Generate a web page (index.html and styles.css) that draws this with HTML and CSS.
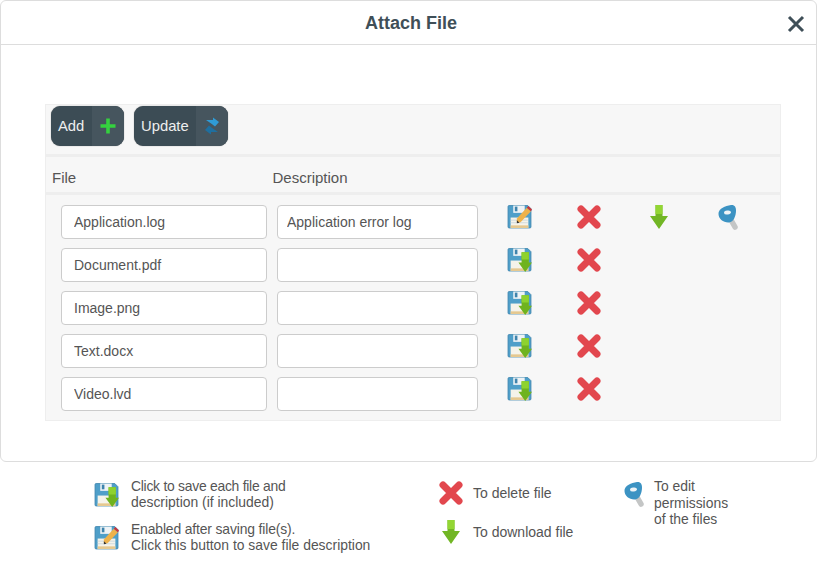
FILE: index.html
```html
<!DOCTYPE html>
<html lang="en">
<head>
<meta charset="utf-8">
<title>Attach File</title>
<link rel="stylesheet" href="styles.css">
</head>
<body>
<svg class="defs" width="0" height="0" aria-hidden="true">
  <defs>
    <symbol id="disk" viewBox="0 0 24 24">
      <path d="M1 2.500A1 1 0 0 1 2 1.500H20L23 4.500V22A1 1 0 0 1 22 23H2A1 1 0 0 1 1 22Z" fill="#4f9fc9" stroke="#3f84ad" stroke-width=".8"/>
      <rect x="6" y="1.500" width="11" height="7" fill="#eef3f6"/>
      <rect x="7.500" y="2.500" width="2.500" height="4.500" fill="#3f84ad"/>
      <rect x="3.500" y="13" width="17" height="10" fill="#f5f3ea"/>
      <rect x="3.500" y="20.500" width="17" height="2.500" fill="#e5c88f"/>
    </symbol>
    <symbol id="save-down" viewBox="0 0 24 24">
      <use href="#disk"/>
      <path d="M14 5H21V15H24L17.500 24L11 15H14Z" fill="#6fb31f"/>
      <path d="M14 5H21V12H14Z" fill="#8ed22f"/>
    </symbol>
    <symbol id="save-edit" viewBox="0 0 24 24">
      <use href="#disk"/>
      <path d="M3.500 15.500H20M3.500 18H20" stroke="#c9d6dc" stroke-width=".8"/>
      <path d="M9.500 14L19 3.500L23 7L13 17.500L9.500 18Z" fill="#eeb24a"/>
      <path d="M19 3.500L20.500 1.800L24 5.300L23 7Z" fill="#c9363c"/>
      <path d="M9.500 15.500L9.500 18.500L12 18Z" fill="#333"/>
    </symbol>
    <symbol id="cross" viewBox="0 0 26 26">
      <path d="M5 5L21 21M21 5L5 21" stroke="#e2474e" stroke-width="7" stroke-linecap="round"/>
    </symbol>
    <symbol id="down" viewBox="0 0 18 24">
      <path d="M5.500 0H12.500V11H18L9 24L0 11H5.500Z" fill="#72b625"/>
      <path d="M5.500 0H12.500V9H5.500Z" fill="#93d634"/>
    </symbol>
    <symbol id="key" viewBox="0 0 22 26">
      <path d="M13 16L17 23" stroke="#c4c6c6" stroke-width="5.500" stroke-linecap="round"/>
      <path d="M0.500 9C1 4.500 7 2 13 1C16.500 0.500 18 3 18 6.500C18 12 15.500 18 11 18.500C6 19 0 15 0.500 9Z" fill="#3c93c3"/>
      <ellipse cx="9.500" cy="8.500" rx="3.500" ry="2" fill="#eef4f7" transform="rotate(-8 9.500 8.500)"/>
    </symbol>
    <symbol id="refresh" viewBox="0 0 16 18">
      <path d="M2 3H9V0.500L15 5L11 9.500L8.500 7.500C7.500 6.500 5 5.500 2 3Z" fill="#2f9bd6"/>
      <path d="M14 15H7V17.500L1 13L5 8.500L7.500 10.500C8.500 11.500 11 12.500 14 15Z" fill="#1f6f9f"/>
    </symbol>
  </defs>
</svg>

<main class="modal">
  <header class="modal-head">
    <h1 class="modal-title">Attach File</h1>
    <button class="close" type="button" aria-label="Close">
      <svg viewBox="0 0 18 18" width="18" height="18"><path d="M2 2L16 16M16 2L2 16" stroke="#3f4f58" stroke-width="3"/></svg>
    </button>
  </header>
  <section class="panel">
    <div class="toolbar">
      <button class="tool" type="button"><span class="tool-label">Add</span><span class="tool-icon"><svg viewBox="0 0 16 16" width="16" height="16"><path d="M8 0.500V15.500M0.500 8H15.500" stroke="#35d13f" stroke-width="3.600"/></svg></span></button>
      <button class="tool" type="button"><span class="tool-label">Update</span><span class="tool-icon"><svg width="16" height="18"><use href="#refresh"/></svg></span></button>
    </div>
    <div class="cols">
      <div class="col-file">File</div>
      <div>Description</div>
    </div>
    <div class="rows">
      <div class="row">
        <input class="field" value="Application.log" aria-label="File">
        <input class="field" value="Application error log" aria-label="Description">
        <span class="cell"><svg class="ico-save"><use href="#save-edit"/></svg></span>
        <span class="cell"><svg class="ico-x"><use href="#cross"/></svg></span>
        <span class="cell"><svg class="ico-down"><use href="#down"/></svg></span>
        <span class="cell"><svg class="ico-key"><use href="#key"/></svg></span>
      </div>
      <div class="row">
        <input class="field" value="Document.pdf" aria-label="File">
        <input class="field" value="" aria-label="Description">
        <span class="cell"><svg class="ico-save"><use href="#save-down"/></svg></span>
        <span class="cell"><svg class="ico-x"><use href="#cross"/></svg></span>
      </div>
      <div class="row">
        <input class="field" value="Image.png" aria-label="File">
        <input class="field" value="" aria-label="Description">
        <span class="cell"><svg class="ico-save"><use href="#save-down"/></svg></span>
        <span class="cell"><svg class="ico-x"><use href="#cross"/></svg></span>
      </div>
      <div class="row">
        <input class="field" value="Text.docx" aria-label="File">
        <input class="field" value="" aria-label="Description">
        <span class="cell"><svg class="ico-save"><use href="#save-down"/></svg></span>
        <span class="cell"><svg class="ico-x"><use href="#cross"/></svg></span>
      </div>
      <div class="row">
        <input class="field" value="Video.lvd" aria-label="File">
        <input class="field" value="" aria-label="Description">
        <span class="cell"><svg class="ico-save"><use href="#save-down"/></svg></span>
        <span class="cell"><svg class="ico-x"><use href="#cross"/></svg></span>
      </div>
    </div>
  </section>
</main>

<footer class="legend">
  <div class="legend-col legend-a">
    <div class="item"><svg class="ico-save"><use href="#save-down"/></svg><p><span class="tight">Click to save each file and</span><br>description (if included)</p></div>
    <div class="item"><svg class="ico-save"><use href="#save-edit"/></svg><p><span class="snug">Enabled after saving file(s).</span><br>Click this button to save file description</p></div>
  </div>
  <div class="legend-col legend-b">
    <div class="item"><svg class="ico-x"><use href="#cross"/></svg><p>To delete file</p></div>
    <div class="item item-down"><svg class="ico-down"><use href="#down"/></svg><p>To download file</p></div>
  </div>
  <div class="legend-col legend-c">
    <div class="item"><svg class="ico-key"><use href="#key"/></svg><p>To edit<br>permissions<br>of the files</p></div>
  </div>
</footer>
</body>
</html>
```
FILE: styles.css
```css
* { box-sizing: border-box; }
html, body { margin: 0; padding: 0; }
body {
  width: 817px;
  height: 582px;
  background: #fff;
  font-family: "Liberation Sans", Arial, sans-serif;
  color: #555;
  font-size: 14px;
  overflow: hidden;
}
.defs { position: absolute; }
svg { display: block; flex: none; }

.modal {
  width: 817px;
  height: 462px;
  border: 1px solid #ddd;
  border-radius: 6px;
}
.modal-head {
  height: 44px;
  display: flex;
  align-items: center;
  justify-content: center;
  position: relative;
  padding: 1px 0 0 5px;
  border-bottom: 1px solid #ddd;
}
.modal-title {
  margin: 0;
  font-size: 18px;
  font-weight: 700;
  color: #3f4f58;
}
.close {
  position: absolute;
  right: 11px;
  top: 14px;
  padding: 0;
  border: 0;
  background: none;
}

.panel {
  width: 736px;
  height: 317px;
  margin: 59px 0 0 44px;
  background: #f7f7f7;
  border: 1px solid #eee;
  font-size: 14.8px;
}
.toolbar {
  height: 52px;
  display: flex;
  gap: 10px;
  padding: 1px 0 0 5px;
  border-bottom: 3px solid #eee;
}
.tool {
  height: 40px;
  display: flex;
  padding: 0;
  border: 0;
  border-radius: 9px;
  overflow: hidden;
  background: #3c4c55;
  color: #eee;
  font: inherit;
  box-shadow: 0 0 1px #777;
}
.tool-label {
  width: 41px;
  padding-left: 7px;
  text-align: left;
  align-self: center;
  margin-top: -1px;
}
.tool + .tool .tool-label { width: 62px; }
.tool-icon {
  width: 32px;
  height: 40px;
  background: #46555e;
  display: flex;
  align-items: center;
  justify-content: center;
}
.tool-icon svg { filter: blur(.3px); }
.cols {
  height: 38px;
  display: flex;
  align-items: center;
  padding: 5px 0 0 6px;
  font-size: 15px;
  border-bottom: 3px solid #eee;
}
.col-file { width: 220.500px; }
.rows {
  padding: 10px 0 0 15px;
  display: flex;
  flex-direction: column;
  gap: 9px;
}
.row {
  height: 34px;
  display: flex;
  align-items: flex-start;
}
.field {
  width: 206px;
  height: 34px;
  margin-right: 10px;
  padding: 0 12px;
  border: 1px solid #ccc;
  border-radius: 4px;
  background: #fff;
  font: 14px "Liberation Sans", Arial, sans-serif;
  color: #555;
}
.field:nth-child(2) { width: 201px; margin-right: 6px; padding: 0 9px; }
.cell {
  width: 70px;
  height: 25px;
  margin-top: -1px;
  display: flex;
  justify-content: center;
  align-items: center;
}
.ico-save { width: 25px; height: 25px; filter: blur(.3px); }
.ico-x { width: 26px; height: 26px; filter: blur(.3px); }
.ico-down { width: 18px; height: 24px; filter: blur(.3px); }
.ico-key { width: 22px; height: 26px; filter: blur(.3px); }

.legend {
  display: flex;
  font-size: 13.9px;
  line-height: 16px;
}
.legend p { margin: 0; }
.tight { letter-spacing: -.26px; }
.snug { letter-spacing: -.14px; }
.legend-col { display: flex; flex-direction: column; }
.item { display: flex; gap: 12px; align-items: center; }
.legend-a { width: 344px; margin-left: 94px; padding-top: 16px; gap: 11px; }
.legend-b { width: 186px; padding-top: 18px; gap: 14px; font-size: 14px; }
.legend-b .item { gap: 9px; }
.legend-b .item.item-down { padding-left: 4px; gap: 13px; }
.legend-c { padding-top: 16px; line-height: 16.500px; }
.legend-c .item { align-items: flex-start; gap: 8px; }
.legend-c svg { margin-top: 3px; }
```
